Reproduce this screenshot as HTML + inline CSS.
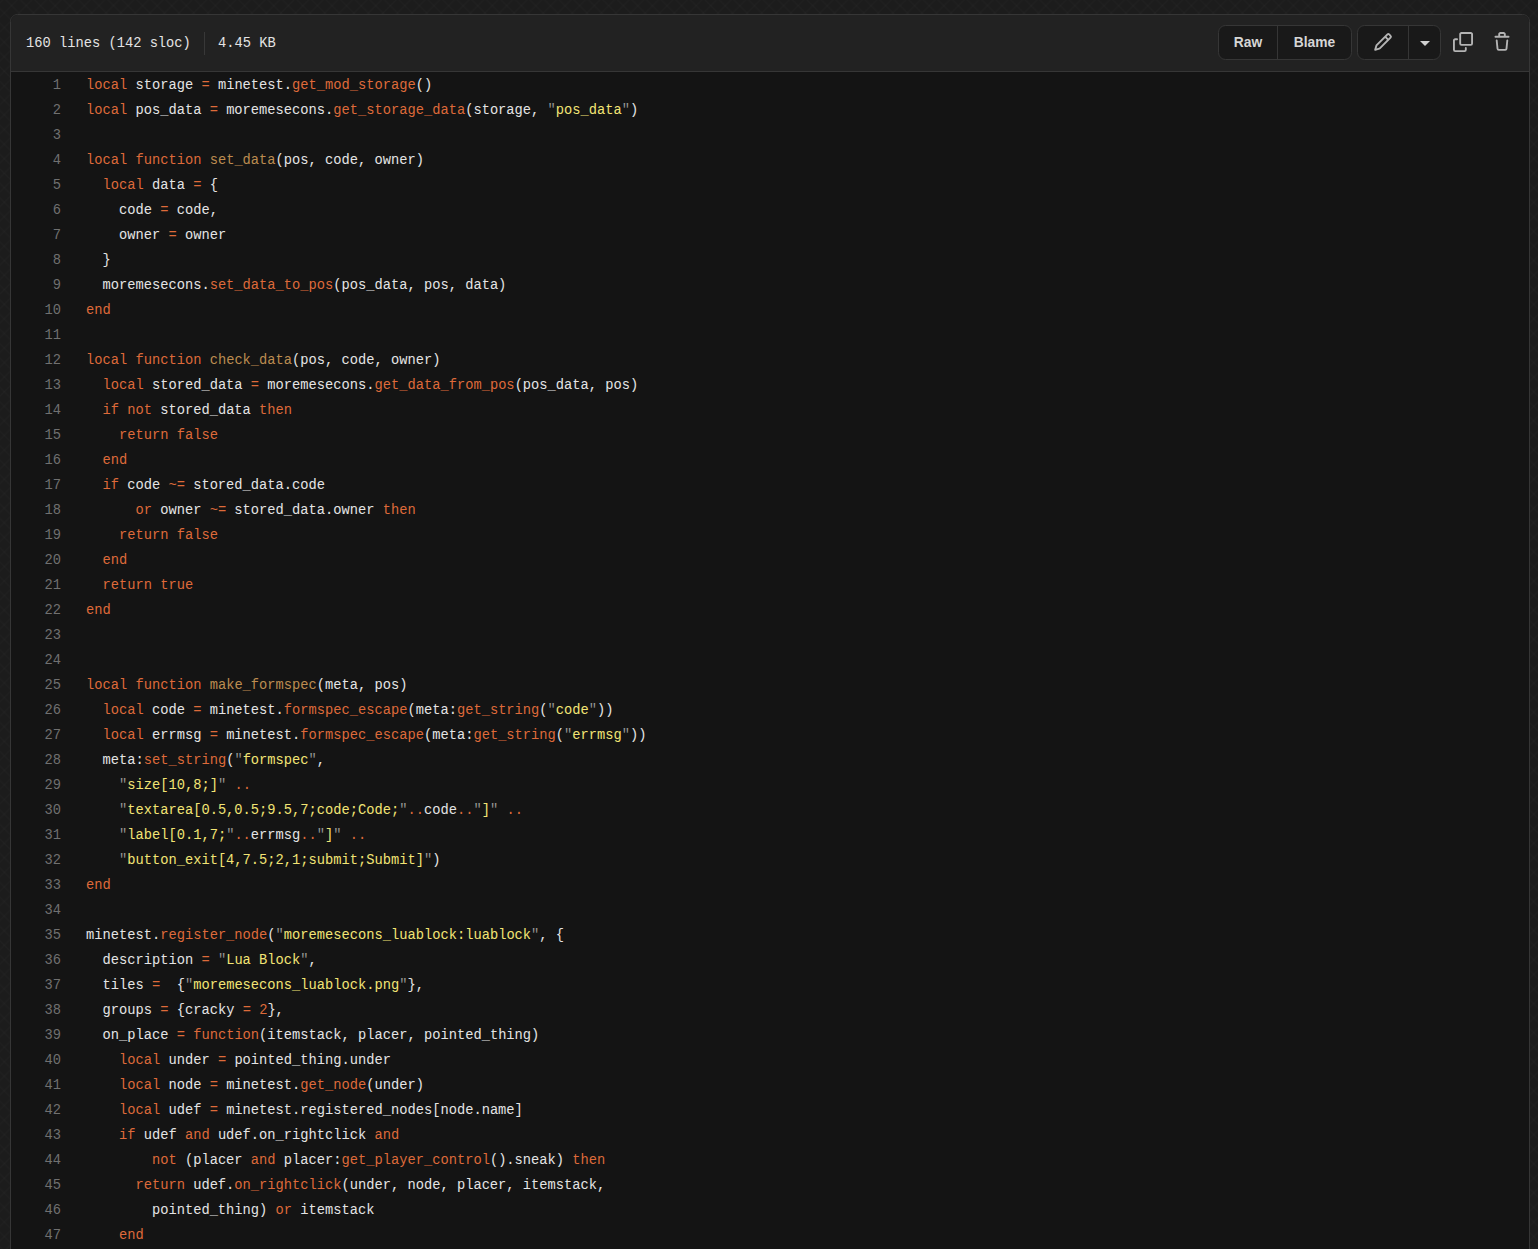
<!DOCTYPE html>
<html lang="en"><head><meta charset="utf-8"><title>luablock init.lua</title>
<style>
html,body{margin:0;padding:0}
body{width:1538px;height:1249px;overflow:hidden;background-color:#1c1c1c;
background-image:repeating-linear-gradient(45deg,transparent 0,rgba(255,255,255,.016) 1.5px,transparent 3px,transparent 10.3px),repeating-linear-gradient(-45deg,transparent 0,rgba(255,255,255,.016) 1.5px,transparent 3px,transparent 10.3px);
font-family:"Liberation Sans",sans-serif;color:#e4e4e4;position:relative}
.box{position:absolute;left:10px;top:14px;width:1518px;height:1300px;border:1px solid #363636;border-radius:7.5px;background:#141414;overflow:hidden}
.hd{height:56px;background:#222;border-bottom:1px solid #363636;position:relative}
.info{position:absolute;left:15px;top:1px;height:56px;line-height:56px;font-family:"Liberation Mono",monospace;font-size:13.74px;color:#e4e4e4;white-space:pre}
.dv{position:absolute;left:193px;top:17px;width:1px;height:22.5px;background:#383838}
.sz{left:207px}
.grp{position:absolute;top:10px;height:33px;border:1px solid #363636;border-radius:7.5px;background:#191919;display:flex}
.grp a{display:block;height:33px;line-height:34px;text-align:center;font-weight:bold;font-size:13.8px;color:#d6d6d6}
.grp a+a{border-left:1px solid #363636}
.ic{position:absolute;display:block}
.code{padding-top:0}
.r{height:25px;line-height:25px;font-family:"Liberation Mono",monospace;font-size:13.74px;white-space:pre;position:relative}
.r b{position:absolute;left:0;top:1px;width:50px;text-align:right;font-weight:normal;color:#707070}
.r span{position:absolute;left:75px;top:1px;color:#e4e4e4}
i{font-style:normal}
.k{color:#de6a3a}
.f{color:#bc8c50}
.s{color:#f2e474}
.q{color:#939390}
</style></head><body>
<div class="box">
<div class="hd">
<div class="info">160 lines (142 sloc)</div><div class="dv"></div><div class="info sz">4.45 KB</div>
<div class="grp" style="left:1207px;width:132px"><a style="width:58px">Raw</a><a style="width:73px">Blame</a></div>
<div class="grp" style="left:1346px;width:82px"><a style="width:50px"><svg class="ic" style="left:15px;top:6px" width="20" height="20" viewBox="0 0 16 16"><path fill="#b4b4b4" fill-rule="evenodd" d="M11.013 1.427a1.75 1.75 0 012.474 0l1.086 1.086a1.75 1.75 0 010 2.474l-8.61 8.61c-.21.21-.47.364-.756.445l-3.251.93a.75.75 0 01-.927-.928l.929-3.25a1.75 1.75 0 01.445-.758l8.61-8.61zm1.414 1.06a.25.25 0 00-.354 0L10.811 3.75l1.439 1.44 1.263-1.263a.25.25 0 000-.354l-1.086-1.086zM11.189 6.25L9.75 4.81l-6.286 6.287a.25.25 0 00-.064.108l-.558 1.953 1.953-.558a.249.249 0 00.108-.064l6.286-6.286z"/></svg></a><a style="width:31px;position:relative"><span style="position:absolute;left:11px;top:15px;border:5px solid transparent;border-top-color:#d0d0d0;border-bottom:0"></span></a></div>
<svg class="ic" style="left:1442px;top:17px" width="20" height="20" viewBox="0 0 16 16"><path fill="#b4b4b4" fill-rule="evenodd" d="M0 6.75C0 5.784.784 5 1.75 5h1.5a.75.75 0 010 1.5h-1.5a.25.25 0 00-.25.25v7.5c0 .138.112.25.25.25h7.5a.25.25 0 00.25-.25v-1.5a.75.75 0 011.5 0v1.5A1.75 1.75 0 019.25 16h-7.5A1.75 1.75 0 010 14.25v-7.5z"/><path fill="#b4b4b4" fill-rule="evenodd" d="M5 1.75C5 .784 5.784 0 6.75 0h7.5C15.216 0 16 .784 16 1.75v7.5A1.75 1.75 0 0114.25 11h-7.5A1.75 1.75 0 015 9.25v-7.5zm1.75-.25a.25.25 0 00-.25.25v7.5c0 .138.112.25.25.25h7.5a.25.25 0 00.25-.25v-7.5a.25.25 0 00-.25-.25h-7.5z"/></svg>
<svg class="ic" style="left:1481px;top:17px" width="20" height="20" viewBox="0 0 16 16"><path fill="#b4b4b4" fill-rule="evenodd" d="M6.5 1.75a.25.25 0 01.25-.25h2.5a.25.25 0 01.25.25V3h-3V1.75zm4.5 0V3h2.25a.75.75 0 010 1.5H2.75a.75.75 0 010-1.5H5V1.75C5 .784 5.784 0 6.75 0h2.5C10.216 0 11 .784 11 1.75zM4.496 6.675a.75.75 0 10-1.492.15l.66 6.6A1.75 1.75 0 005.405 15h5.19c.9 0 1.652-.681 1.741-1.576l.66-6.6a.75.75 0 00-1.492-.149l-.66 6.6a.25.25 0 01-.249.225h-5.19a.25.25 0 01-.249-.225l-.66-6.6z"/></svg>
</div>
<div class="code">
<div class="r"><b>1</b><span><i class="k">local</i> storage <i class="k">=</i> minetest.<i class="k">get_mod_storage</i>()</span></div>
<div class="r"><b>2</b><span><i class="k">local</i> pos_data <i class="k">=</i> moremesecons.<i class="k">get_storage_data</i>(storage, <i class="q">"</i><i class="s">pos_data</i><i class="q">"</i>)</span></div>
<div class="r"><b>3</b><span></span></div>
<div class="r"><b>4</b><span><i class="k">local</i> <i class="k">function</i> <i class="f">set_data</i>(pos, code, owner)</span></div>
<div class="r"><b>5</b><span>  <i class="k">local</i> data <i class="k">=</i> {</span></div>
<div class="r"><b>6</b><span>    code <i class="k">=</i> code,</span></div>
<div class="r"><b>7</b><span>    owner <i class="k">=</i> owner</span></div>
<div class="r"><b>8</b><span>  }</span></div>
<div class="r"><b>9</b><span>  moremesecons.<i class="k">set_data_to_pos</i>(pos_data, pos, data)</span></div>
<div class="r"><b>10</b><span><i class="k">end</i></span></div>
<div class="r"><b>11</b><span></span></div>
<div class="r"><b>12</b><span><i class="k">local</i> <i class="k">function</i> <i class="f">check_data</i>(pos, code, owner)</span></div>
<div class="r"><b>13</b><span>  <i class="k">local</i> stored_data <i class="k">=</i> moremesecons.<i class="k">get_data_from_pos</i>(pos_data, pos)</span></div>
<div class="r"><b>14</b><span>  <i class="k">if</i> <i class="k">not</i> stored_data <i class="k">then</i></span></div>
<div class="r"><b>15</b><span>    <i class="k">return</i> <i class="k">false</i></span></div>
<div class="r"><b>16</b><span>  <i class="k">end</i></span></div>
<div class="r"><b>17</b><span>  <i class="k">if</i> code <i class="k">~=</i> stored_data.code</span></div>
<div class="r"><b>18</b><span>      <i class="k">or</i> owner <i class="k">~=</i> stored_data.owner <i class="k">then</i></span></div>
<div class="r"><b>19</b><span>    <i class="k">return</i> <i class="k">false</i></span></div>
<div class="r"><b>20</b><span>  <i class="k">end</i></span></div>
<div class="r"><b>21</b><span>  <i class="k">return</i> <i class="k">true</i></span></div>
<div class="r"><b>22</b><span><i class="k">end</i></span></div>
<div class="r"><b>23</b><span></span></div>
<div class="r"><b>24</b><span></span></div>
<div class="r"><b>25</b><span><i class="k">local</i> <i class="k">function</i> <i class="f">make_formspec</i>(meta, pos)</span></div>
<div class="r"><b>26</b><span>  <i class="k">local</i> code <i class="k">=</i> minetest.<i class="k">formspec_escape</i>(meta:<i class="k">get_string</i>(<i class="q">"</i><i class="s">code</i><i class="q">"</i>))</span></div>
<div class="r"><b>27</b><span>  <i class="k">local</i> errmsg <i class="k">=</i> minetest.<i class="k">formspec_escape</i>(meta:<i class="k">get_string</i>(<i class="q">"</i><i class="s">errmsg</i><i class="q">"</i>))</span></div>
<div class="r"><b>28</b><span>  meta:<i class="k">set_string</i>(<i class="q">"</i><i class="s">formspec</i><i class="q">"</i>,</span></div>
<div class="r"><b>29</b><span>    <i class="q">"</i><i class="s">size[10,8;]</i><i class="q">"</i> <i class="k">..</i></span></div>
<div class="r"><b>30</b><span>    <i class="q">"</i><i class="s">textarea[0.5,0.5;9.5,7;code;Code;</i><i class="q">"</i><i class="k">..</i>code<i class="k">..</i><i class="q">"</i><i class="s">]</i><i class="q">"</i> <i class="k">..</i></span></div>
<div class="r"><b>31</b><span>    <i class="q">"</i><i class="s">label[0.1,7;</i><i class="q">"</i><i class="k">..</i>errmsg<i class="k">..</i><i class="q">"</i><i class="s">]</i><i class="q">"</i> <i class="k">..</i></span></div>
<div class="r"><b>32</b><span>    <i class="q">"</i><i class="s">button_exit[4,7.5;2,1;submit;Submit]</i><i class="q">"</i>)</span></div>
<div class="r"><b>33</b><span><i class="k">end</i></span></div>
<div class="r"><b>34</b><span></span></div>
<div class="r"><b>35</b><span>minetest.<i class="k">register_node</i>(<i class="q">"</i><i class="s">moremesecons_luablock:luablock</i><i class="q">"</i>, {</span></div>
<div class="r"><b>36</b><span>  description <i class="k">=</i> <i class="q">"</i><i class="s">Lua Block</i><i class="q">"</i>,</span></div>
<div class="r"><b>37</b><span>  tiles <i class="k">=</i>  {<i class="q">"</i><i class="s">moremesecons_luablock.png</i><i class="q">"</i>},</span></div>
<div class="r"><b>38</b><span>  groups <i class="k">=</i> {cracky <i class="k">=</i> <i class="k">2</i>},</span></div>
<div class="r"><b>39</b><span>  on_place <i class="k">=</i> <i class="k">function</i>(itemstack, placer, pointed_thing)</span></div>
<div class="r"><b>40</b><span>    <i class="k">local</i> under <i class="k">=</i> pointed_thing.under</span></div>
<div class="r"><b>41</b><span>    <i class="k">local</i> node <i class="k">=</i> minetest.<i class="k">get_node</i>(under)</span></div>
<div class="r"><b>42</b><span>    <i class="k">local</i> udef <i class="k">=</i> minetest.registered_nodes[node.name]</span></div>
<div class="r"><b>43</b><span>    <i class="k">if</i> udef <i class="k">and</i> udef.on_rightclick <i class="k">and</i></span></div>
<div class="r"><b>44</b><span>        <i class="k">not</i> (placer <i class="k">and</i> placer:<i class="k">get_player_control</i>().sneak) <i class="k">then</i></span></div>
<div class="r"><b>45</b><span>      <i class="k">return</i> udef.<i class="k">on_rightclick</i>(under, node, placer, itemstack,</span></div>
<div class="r"><b>46</b><span>        pointed_thing) <i class="k">or</i> itemstack</span></div>
<div class="r"><b>47</b><span>    <i class="k">end</i></span></div>
</div>
</div>
</body></html>
